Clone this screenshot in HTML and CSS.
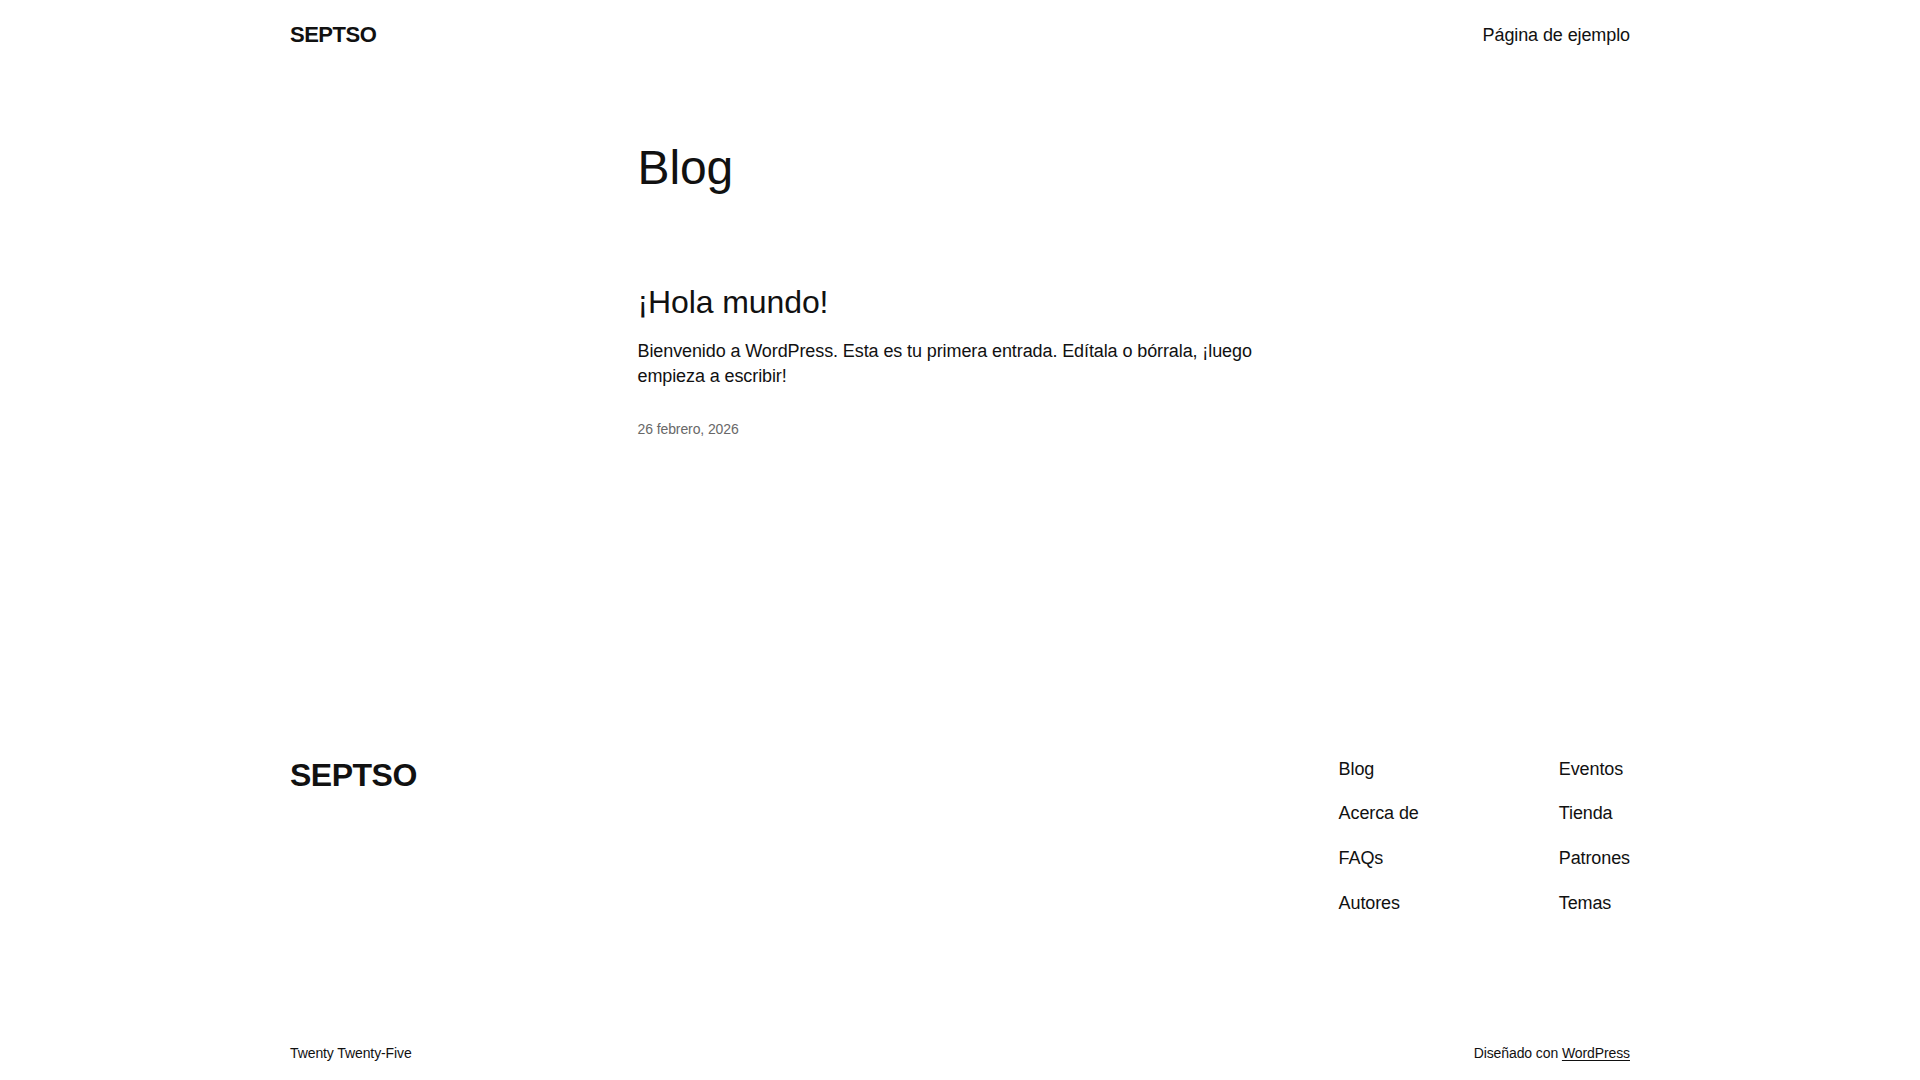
FILE: index.html
```html
<!DOCTYPE html>
<html lang="es">
<head>
<meta charset="utf-8">
<title>Blog – SEPTSO</title>
<link rel="stylesheet" href="styles.css">
</head>
<body>
<header class="site-header">
  <div class="wrap header-row">
    <a class="site-title" href="#">SEPTSO</a>
    <nav class="header-nav">
      <a href="#">Página de ejemplo</a>
    </nav>
  </div>
</header>

<main class="content">
  <h1 class="page-title">Blog</h1>
  <article class="post">
    <h2 class="post-title"><a href="#">¡Hola mundo!</a></h2>
    <p class="post-excerpt">Bienvenido a WordPress. Esta es tu primera entrada. Edítala o bórrala, ¡luego empieza a escribir!</p>
    <div class="post-date">26 febrero, 2026</div>
  </article>
</main>

<footer class="site-footer">
  <div class="wrap footer-main">
    <a class="footer-title" href="#">SEPTSO</a>
    <div class="footer-nav">
      <nav class="footer-col">
        <a href="#">Blog</a>
        <a href="#">Acerca de</a>
        <a href="#">FAQs</a>
        <a href="#">Autores</a>
      </nav>
      <nav class="footer-col">
        <a href="#">Eventos</a>
        <a href="#">Tienda</a>
        <a href="#">Patrones</a>
        <a href="#">Temas</a>
      </nav>
    </div>
  </div>
  <div class="wrap footer-bottom">
    <p class="credit">Twenty Twenty-Five</p>
    <p class="credit">Diseñado con <a class="credit-link" href="#">WordPress</a></p>
  </div>
</footer>
</body>
</html>
```
FILE: styles.css
```css
html, body {
  margin: 0;
  padding: 0;
  background: #ffffff;
}

body {
  font-family: "Liberation Sans", Arial, sans-serif;
  color: #111111;
  font-size: 18px;
  line-height: 1.4;
  letter-spacing: -0.1px;
}

a {
  color: inherit;
  text-decoration: none;
}

.wrap {
  max-width: 1340px;
  margin: 0 auto;
}

/* Header */
.header-row {
  display: flex;
  justify-content: space-between;
  align-items: center;
  padding: 20px 0 19px;
}

.site-title {
  font-size: 22px;
  font-weight: 700;
  line-height: 1.4;
  letter-spacing: -0.5px;
}

.header-nav a {
  font-size: 18px;
  line-height: 1.4;
}

/* Main */
.content {
  width: 645px;
  margin: 0 auto;
}

.page-title {
  margin: 71px 0 0;
  font-size: 48px;
  font-weight: 400;
  line-height: 1.125;
}

.post-title {
  margin: 89px 0 0;
  font-size: 32px;
  font-weight: 400;
  line-height: 1.125;
}

.post-excerpt {
  margin: 19px 0 0;
  font-size: 18px;
  line-height: 1.4;
}

.post-date {
  margin-top: 31px;
  font-size: 14px;
  line-height: 1.4;
  color: #686868;
}

/* Footer */
.site-footer {
  padding-top: 317px;
  padding-bottom: 12px;
}

.footer-main {
  display: flex;
  justify-content: space-between;
  align-items: flex-start;
}

.footer-title {
  margin-top: 1px;
  font-size: 32px;
  font-weight: 700;
  line-height: 1.1;
  letter-spacing: -0.5px;
}

.footer-nav {
  display: flex;
  gap: 140px;
}

.footer-col {
  display: flex;
  flex-direction: column;
  gap: 19.4px;
}

.footer-col a {
  font-size: 18px;
  line-height: 1.4;
}

.footer-bottom {
  display: flex;
  justify-content: space-between;
  margin-top: 128px;
}

.credit {
  margin: 0;
  font-size: 14px;
  line-height: 1.4;
}

.credit-link {
  text-decoration: underline;
  text-underline-offset: 2px;
}
```
